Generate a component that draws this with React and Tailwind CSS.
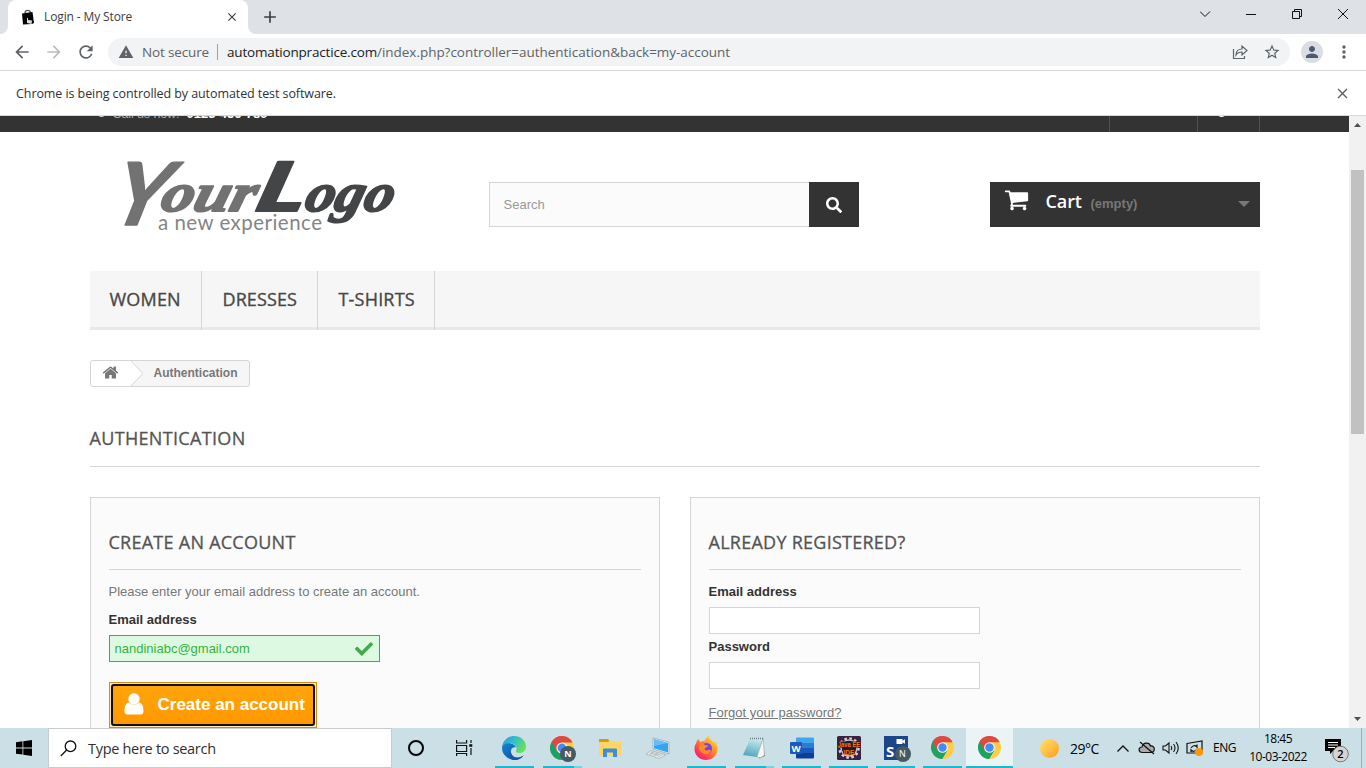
import React from "react";
import {
  MdArrowBack, MdArrowForward, MdRefresh, MdWarning, MdStarBorder, MdPerson, MdMoreVert, MdClose, MdAdd,
} from "react-icons/md";
import { FaSearch, FaCheck } from "react-icons/fa";

function CartIcon() {
  return (
    <svg viewBox="0 0 1792 1792" className="ml-[-1px] mt-[5px] size-[25px]" fill="#fff">
      <path d="M704 1536q0 52-38 90t-90 38-90-38-38-90 38-90 90-38 90 38 38 90zm896 0q0 52-38 90t-90 38-90-38-38-90 38-90 90-38 90 38 38 90zm128-1088v512q0 24-16.5 42.5t-40.5 21.5l-1044 122q13 60 13 70 0 16-24 64h920q26 0 45 19t19 45-19 45-45 19h-1024q-26 0-45-19t-19-45q0-11 8-31.5t16-36 21.500-40 15.500-29.500l-177-823h-204q-26 0-45-19t-19-45 19-45 45-19h256q16 0 28.500 6.500t19.500 15.500 13 24.500 8 26 5.500 29.500 4.500 26h1201q26 0 45 19t19 45z" />
    </svg>
  );
}

function HomeIcon() {
  return (
    <svg viewBox="0 0 1792 1792" className="-mt-px size-[17px]" fill="#777">
      <path d="M1472 992v480q0 26-19 45t-45 19h-384v-384h-256v384h-384q-26 0-45-19t-19-45v-480q0-1 .5-3t.5-3l575-474 575 474q1 2 1 6zm223-69l-62 74q-8 9-21 11h-3q-13 0-21-7l-692-577-692 577q-12 8-24 7-13-2-21-11l-62-74q-8-10-7-23.500t11-21.500l719-599q32-26 76-26t76 26l244 204v-195q0-14 9-23t23-9h192q14 0 23 9t9 23v408l219 182q10 8 11 21.500t-7 23.500z" />
    </svg>
  );
}

function ChromeLogo({ className }) {
  return (
    <svg viewBox="0 0 24 24" className={className}>
      <path d="M12 12 1.6 6A12 12 0 0 1 22.4 6Z" fill="#dd4b3e" />
      <path d="M12 12 1.6 6A12 12 0 0 0 12 24L17.2 15Z" fill="#1da261" />
      <path d="M22.4 6A12 12 0 0 1 12 24L17.2 15 12 6Z" fill="#ffce44" />
      <path d="M1.6 6A12 12 0 0 1 22.4 6.5H12L6.8 15Z" fill="#dd4b3e" />
      <circle cx="12" cy="12" r="5.6" fill="#f4f6f8" />
      <circle cx="12" cy="12" r="4.4" fill="#4a8af4" />
    </svg>
  );
}

function Badge() {
  return (
    <span className="absolute left-[10px] top-[10px] flex size-4 items-center justify-center rounded-full bg-[#455a64] text-[9px] font-bold leading-none text-white">
      N
    </span>
  );
}

function EdgeLogo() {
  return (
    <svg viewBox="0 0 24 24" className="size-6">
      <defs>
        <linearGradient id="edgeTop" x1="0" y1="0" x2="1" y2=".5">
          <stop offset="0" stopColor="#1b9de2" />
          <stop offset=".55" stopColor="#35c1c4" />
          <stop offset="1" stopColor="#66e05c" />
        </linearGradient>
        <linearGradient id="edgeLow" x1="0" y1="0" x2="1" y2="1">
          <stop offset="0" stopColor="#1584d8" />
          <stop offset="1" stopColor="#0c4a94" />
        </linearGradient>
      </defs>
      <path d="M0 11C1 4 6 0 12 0c7 0 12 5 12 10.500 0 4-3 6.500-6.500 6.500-3 0-4-1.200-3.400-2.300C16 11 12.500 7.500 8.500 7.500 4 7.500 1 9 0 11Z" fill="url(#edgeTop)" />
      <path d="M0 12C0 9 4 6.800 8.500 7.500c3 .4 5 2.200 5.600 4-4-1-6 2-5 5.500 1 4 6 6.500 12.500 2.500C18 25 9 25.500 4 20.500 1 18 0 15 0 12Z" fill="url(#edgeLow)" />
      <path d="M9 17c1 5 7 6.500 12.600 2.500C19 23 15 24.500 11 24 7 22 7.500 15 10.500 12.500 9 14 8.700 15.500 9 17Z" fill="#0e5ba8" />
    </svg>
  );
}

function FolderIcon() {
  return (
    <svg viewBox="0 0 22 20" className="h-5 w-[22px]">
      <path d="M0 1h9l1.500 2H22v15H0Z" fill="#ffd566" />
      <path d="M0 1h9l1.500 2L9 4H0Z" fill="#d99a11" />
      <path d="M4 19v-7.500Q4 10.500 5 10.500h12q1 0 1 1V19h-4v-4.500H8V19Z" fill="#3d8fd1" />
    </svg>
  );
}

function LaptopIcon() {
  return (
    <svg viewBox="0 0 24 22" className="h-[22px] w-6">
      <path d="M7 1 23 5v12L7 12Z" fill="#e9eef2" stroke="#8a959c" strokeWidth=".6" />
      <path d="M8 2.300 22 6v9.500L8 11.200Z" fill="#35a4ee" />
      <path d="M8 2.300 22 6 8 9Z" fill="#65bff6" />
      <path d="M5 13.500 20 18l-7 3.500L0 17Z" fill="#e7eaec" stroke="#98a2a8" strokeWidth=".6" />
      <path d="M5 15 16 18.500M3.500 16 14 19.500M8 14.500 4 18M12 16l-4 3" stroke="#8e999f" strokeWidth=".5" />
    </svg>
  );
}

function FirefoxLogo() {
  return (
    <svg viewBox="0 0 24 24" className="size-6">
      <defs>
        <linearGradient id="fox" x1="1" y1="0" x2=".15" y2="1">
          <stop offset="0" stopColor="#fff24a" />
          <stop offset=".4" stopColor="#ff9a27" />
          <stop offset=".75" stopColor="#ff4052" />
          <stop offset="1" stopColor="#e31587" />
        </linearGradient>
      </defs>
      <path d="M4 3 6.500 6C8 5 9.500 5 10.500 5.200 11 3 13 1 15 0c0 3 3 4 4.500 6.500C20.500 7 21 6 21 5c2 3 3 6 2.500 9C23 20 18 24 12 24S.5 19.500.5 13C.5 9 2 8 2.500 6 3 5 4 3 4 3Z" fill="url(#fox)" />
      <circle cx="12.500" cy="12.500" r="5.500" fill="#7542e5" />
      <path d="M5 8c3-1 5 0 6 1l3 .5c0 2-2 2-3 2.500-1 2 1 3 3.500 2 3-1 3 2 0 3.500C10 19.500 6 16 5 12Z" fill="#ff8a25" />
    </svg>
  );
}

function NotepadIcon() {
  return (
    <svg viewBox="0 0 24 24" className="size-6">
      <defs>
        <linearGradient id="pad" x1=".6" y1="0" x2=".3" y2="1">
          <stop offset="0" stopColor="#c9e9ef" />
          <stop offset="1" stopColor="#4ba3bb" />
        </linearGradient>
      </defs>
      <path d="M20 3 23 20l-6 2.500Z" fill="#8b7a63" />
      <path d="M8 3 21 2.500 15 21 1 19Z" fill="url(#pad)" />
      <path d="M21 2.500 15 21l4 .7L22.500 19Z" fill="#f6f8f5" stroke="#8d9998" strokeWidth=".5" />
      <path d="M8 2.500h13" stroke="#667b80" strokeWidth="1.500" strokeDasharray="1 1" />
    </svg>
  );
}

function WordIcon() {
  return (
    <svg viewBox="0 0 24 22" className="h-[22px] w-6">
      <path d="M6 1.500Q6 .5 7 .5h16q1 0 1 1V6H6Z" fill="#41a5ee" />
      <path d="M6 6h18v5H6Z" fill="#2b7cd3" />
      <path d="M6 11h18v5H6Z" fill="#185abd" />
      <path d="M6 16h18v4.500q0 1-1 1H7q-1 0-1-1Z" fill="#103f91" />
      <rect y="5" width="12" height="12" rx="1" fill="#185abd" />
      <text x="6" y="14.500" textAnchor="middle" fontSize="9.500" fontWeight="700" fontFamily="Open Sans, sans-serif" fill="#fff">W</text>
    </svg>
  );
}

function JavaIcon() {
  return (
    <svg viewBox="0 0 24 24" className="size-6">
      <rect width="24" height="24" rx="1.500" fill="#3a2340" />
      <circle cx="12" cy="12" r="9.600" fill="none" stroke="#d8d2da" strokeWidth="2.400" strokeDasharray="2.600 2.430" />
      <circle cx="12" cy="12" r="8" fill="#241a2a" stroke="#c8c0cb" strokeWidth="1.500" />
      <path d="M1 5.500h22v6H1ZM6 11.500h12v6H6Z" fill="#2a1a26" />
      <text x="12" y="10.800" textAnchor="middle" textLength="22.500" lengthAdjust="spacingAndGlyphs" fontSize="7" fontWeight="700" fontFamily="Liberation Sans, sans-serif" fill="#f07818">Java EE</text>
      <text x="12" y="18.800" textAnchor="middle" textLength="11" lengthAdjust="spacingAndGlyphs" fontSize="7" fontWeight="700" fontFamily="Liberation Sans, sans-serif" fill="#f07818">IDE</text>
    </svg>
  );
}

function SIcon() {
  return (
    <span className="relative block size-6 bg-[#1c458c]">
      <svg viewBox="0 0 24 24" className="size-6">
        <path d="M12.500 3h6v1.800L21 3.200v4.600l-2.500-1.600V8h-6Z" fill="#fff" />
        <text x="2" y="21" fontSize="15" fontWeight="700" fontFamily="Open Sans, sans-serif" fill="#fff">S</text>
      </svg>
      <span className="absolute left-[11px] top-[10px] flex size-4 items-center justify-center rounded-full bg-[#455a64] text-[9px] leading-none text-white">N</span>
    </span>
  );
}

function Task({ children, wide, line = true, active, split }) {
  return (
    <div className={`flex h-10 flex-col items-center ${wide ? "w-12" : "w-[47px]"} ${active ? "bg-[#eaf3f6]" : ""}`}>
      <div className="flex h-[38px] items-center justify-center pt-px">{children}</div>
      {line && (
        <div className={`flex h-0.5 bg-[#22b5cb] ${active ? "w-full" : "w-[39px]"}`}>
          {split && <span className="ml-auto h-0.5 w-2 bg-[#7ad2de]" />}
        </div>
      )}
    </div>
  );
}

function BrowserChrome() {
  return (
    <header className="font-['Open_Sans',sans-serif]">
      <div className="flex h-[34px] bg-[#dee1e6]">
        <div className="flex w-2 items-end bg-white"><span className="h-full w-2 rounded-br-lg bg-[#dee1e6]" /></div>
        <div className="flex w-60 items-center rounded-t-lg bg-white pl-3 pr-[9px]">
          <svg viewBox="0 0 16 16" className="mr-[9px] size-4">
            <path d="M5 4C5 .5 10 .5 10.500 4" fill="none" stroke="#555" strokeWidth="1.400" />
            <path d="M2 4.500 12.500 3l1.500 11-2 1-9 .500Z" fill="#000" />
            <path d="M7 14V9h1v2l4 .5-.5 3.500Z" fill="#ddd" />
          </svg>
          <span className="-ml-px flex-1 whitespace-nowrap text-[12px] tracking-[-0.12px] text-[#3c4043]">Login - My Store</span>
          <MdClose className="size-3.5 text-[#3c4043]" />
        </div>
        <div className="flex w-2 bg-white"><span className="h-full w-2 rounded-bl-lg bg-[#dee1e6]" /></div>
        <MdAdd className="ml-1 mt-[7px] size-5 text-[#3c4043]" />
        <svg viewBox="0 0 150 14" className="ml-auto mr-4 mt-[7px] h-3.5 w-[150px]" fill="none" stroke="#111" strokeWidth="1">
          <path d="M0 4.500 5 9.500l5-5" />
          <path d="M46 7.500h10" />
          <path d="M92.500 4.500h7v7h-7ZM94.500 4.500v-2h7v7h-2" />
          <path d="m138 2 10 10M148 2l-10 10" />
        </svg>
      </div>
      <div className="flex h-9 items-center bg-white pl-3">
        <MdArrowBack className="size-5 text-[#5f6368]" />
        <MdArrowForward className="ml-3 size-5 text-[#babcbe]" />
        <MdRefresh className="ml-3 size-5 text-[#5f6368]" />
        <div className="ml-3 flex h-7 w-[1182px] items-center rounded-full bg-[#f1f3f4] pl-2.5 pr-[9px] text-[14px]">
          <MdWarning className="size-4 text-[#5f6368]" />
          <span className="ml-2 w-[75px] whitespace-nowrap text-[13.5px] tracking-[-0.15px] text-[#5f6368]">Not secure</span>
          <span className="h-4 w-px bg-[#9aa0a6]" />
          <span className="ml-[9px] flex-1 whitespace-nowrap text-[13.5px] tracking-[-0.07px] text-[#5f6368]"><span className="tracking-[-0.18px] text-[#202124]">automationpractice.com</span><span className="tracking-[-0.03px]">/index.php?controller=authentication&amp;back=my-account</span></span>
          <svg viewBox="0 0 16 16" className="mr-[15px] size-4" fill="none" stroke="#5f6368" strokeWidth="1.200">
            <path d="M1.500 5v9.500h11V12" />
            <path d="M4 11C4 7 6.500 5 10 5V2l5 4.500-5 4.500V8C7.500 8 5.500 8.500 4 11Z" />
          </svg>
          <MdStarBorder className="size-[18px] text-[#5f6368]" />
        </div>
        <span className="ml-[11px] flex size-[22px] items-center justify-center rounded-full bg-[#dadde2]"><MdPerson className="size-[18px] text-[#4e5a70]" /></span>
        <MdMoreVert className="ml-[11px] size-5 text-[#5f6368]" />
      </div>
      <div className="flex h-[46px] items-center justify-between border-y border-[#d8d8d8] bg-white pl-4 pr-[15px]">
        <span className="pt-0.5 text-[12.5px] tracking-[-0.08px] text-[#303134]">Chrome is being controlled by automated test software.</span>
        <MdClose className="size-[17px] text-[#5f6368]" />
      </div>
    </header>
  );
}

function Logo() {
  return (
    <svg viewBox="0 0 285 84" className="h-[84px] w-[285px] overflow-visible">
      <g fontFamily="Liberation Serif, serif" fontWeight="700" fontStyle="italic" strokeLinejoin="round">
        <g transform="skewX(-15)" fill="#717271" stroke="#717271" strokeWidth="2">
          <text x="14" y="71" fontSize="87" textLength="55" lengthAdjust="spacingAndGlyphs" fontFamily="Lato, sans-serif" strokeWidth="1.500">Y</text>
          <text x="62" y="57" fontSize="54" textLength="94" lengthAdjust="spacingAndGlyphs">our</text>
        </g>
        <g transform="skewX(-15)" fill="#444546" stroke="#444546" strokeWidth="2">
          <text x="156" y="57" fontSize="68" textLength="49" lengthAdjust="spacingAndGlyphs" fontFamily="Lato, sans-serif" fontWeight="900">L</text>
          <text x="206" y="57" fontSize="54" textLength="88" lengthAdjust="spacingAndGlyphs">ogo</text>
        </g>
      </g>
      <text x="46" y="76" fontFamily="Lato, sans-serif" fontSize="20.500" textLength="164" fill="#858585">a new experience</text>
    </svg>
  );
}

function BoxTitle({ children }) {
  return <h2 className="h-[54px] border-b border-[#d6d4d4] font-['Open_Sans',sans-serif] text-[18px] leading-[52px] tracking-[0.26px] text-[#555454] [-webkit-text-stroke:0.3px_#555454]">{children}</h2>;
}

function Page() {
  return (
    <main className="h-[612px] w-[1349px] overflow-hidden bg-white font-['Liberation_Sans',sans-serif] text-[13px] text-[#777]">
      <div className="h-4 overflow-hidden bg-[#333]">
        <div className="mx-auto -mt-3.5 flex h-[30px] w-[1170px] text-[13px] leading-[20px] text-white">
          <span className="ml-[7px] mt-1.5 size-[9px] rounded-full bg-[#ddd]" />
          <span className="ml-[7px] w-[74px] whitespace-nowrap text-[12.5px] leading-6 tracking-[-0.1px] text-[#aaa]">Call us now:</span>
          <b className="leading-6">0123-456-789</b>
          <span className="ml-auto w-[89px] border-x border-[#515151] pl-2.5 font-bold leading-4">Contact us</span>
          <span className="w-[62px] border-r border-[#515151] pl-2 font-bold leading-4">Sign in</span>
        </div>
      </div>
      <div className="mx-auto w-[1170px]">
        <div className="flex h-[139px]">
          <div className="w-[399px] pl-[22px] pt-[22px]"><Logo /></div>
          <div className="mt-[50px] flex h-[45px] w-[370px]">
            <div className="flex flex-1 items-center border border-r-0 border-[#d6d4d4] bg-[#fbfbfb] pl-3.5 text-[#999]">Search</div>
            <button className="flex w-[50px] items-center justify-center bg-[#333] text-white"><FaSearch className="size-4" /></button>
          </div>
          <div className="ml-auto mt-[50px] flex h-[45px] w-[270px] bg-[#333] pl-[15px]">
            <CartIcon />
            <span className="ml-[17px] w-[45px] font-['Open_Sans',sans-serif] text-[18px] font-semibold leading-[38px] tracking-[-0.1px] text-white">Cart</span>
            <span className="font-bold leading-[43px] text-[#777]">(empty)</span>
            <svg viewBox="0 0 12 6" className="ml-auto mr-[10px] mt-[19px] h-1.5 w-3"><path d="M0 0h12L6 6Z" fill="#777" /></svg>
          </div>
        </div>
        <nav className="flex h-[59px] border-b-[3px] border-[#e9e9e9] bg-[#f6f6f6] font-['Open_Sans',sans-serif] text-[18px] leading-[57px] tracking-[0.2px] text-[#484848] [-webkit-text-stroke:0.35px_#484848]">
          <a className="-mb-[3px] w-28 border-r border-[#d6d4d4] pl-5">WOMEN</a>
          <a className="-mb-[3px] w-[116px] border-r border-[#d6d4d4] pl-[21px] tracking-[0.1px]">DRESSES</a>
          <a className="-mb-[3px] w-[117px] border-r border-[#d6d4d4] pl-[21px]">T-SHIRTS</a>
        </nav>
        <div className="mt-[30px] flex h-[27px] w-40 overflow-hidden rounded-[3px] border border-[#d6d4d4] bg-[#f6f6f6] text-[12px] font-bold leading-[25px]">
          <span className="flex w-10 justify-center bg-white pr-px pt-1"><HomeIcon /></span>
          <svg viewBox="0 0 12 25" className="h-[25px] w-3"><path d="M0 0 12 12.500 0 25Z" fill="#fff" /><path d="M0 0 12 12.500 0 25" fill="none" stroke="#d6d4d4" /></svg>
          <span className="ml-[11px]">Authentication</span>
        </div>
        <h1 className="mt-6 h-14 border-b border-[#d6d4d4] font-['Open_Sans',sans-serif] text-[18px] leading-[55px] tracking-[0.33px] text-[#555454] [-webkit-text-stroke:0.3px_#555454]">AUTHENTICATION</h1>
        <div className="mt-[30px] grid grid-cols-2 gap-[30px]">
          <section className="h-[280px] border border-[#d6d4d4] bg-[#fbfbfb] px-[18px] pt-[18px]">
            <BoxTitle>CREATE AN ACCOUNT</BoxTitle>
            <p className="mt-[13px] leading-[18px]">Please enter your email address to create an account.</p>
            <p className="mt-2.5 font-bold leading-[18px] text-[#333]">Email address</p>
            <div className="mt-1.5 flex h-[27px] w-[271px] items-center justify-between border border-[#46a74e] bg-[#ddf9e1] pl-[5px] pr-1.5 text-[#35b33f]">
              nandiniabc@gmail.com<FaCheck className="size-[18px] text-[#46a74e]" />
            </div>
            <div className="mt-5 h-[46px] w-[208px] border border-[#d88912] bg-[#ffe8b8] p-px">
              <button className="flex h-[42px] w-full items-center rounded-[3px] border-2 border-[#101010] bg-linear-to-b from-[#ffa50c] to-[#ff9800] pl-[11px] text-[17px] font-bold text-white">
                <svg viewBox="0 0 20 22" className="-mt-0.5 h-[22px] w-5" fill="#fff"><circle cx="10" cy="6" r="5.700" /><path d="M5 9.500C1.500 10 .5 14 .5 18q0 3.500 3 3.500h13q3 0 3-3.500c0-4-1-8-4.500-8.500-3 3-7 3-10 0Z" /></svg>
                <span className="ml-[14px] whitespace-nowrap">Create an account</span>
              </button>
            </div>
          </section>
          <section className="h-[280px] border border-[#d6d4d4] bg-[#fbfbfb] px-[18px] pt-[18px]">
            <BoxTitle>ALREADY REGISTERED?</BoxTitle>
            <p className="mt-[13px] font-bold leading-[18px] text-[#333]">Email address</p>
            <div className="mt-1.5 h-[27px] w-[271px] border border-[#d6d4d4] bg-white" />
            <p className="mt-1 font-bold leading-[18px] text-[#333]">Password</p>
            <div className="mt-[6px] h-[27px] w-[271px] border border-[#d6d4d4] bg-white" />
            <p className="mt-[15px] leading-[18px] underline">Forgot your password?</p>
          </section>
        </div>
      </div>
    </main>
  );
}

function Taskbar() {
  return (
    <footer className="flex h-10 bg-[#cbe0e6] font-['Open_Sans',sans-serif] text-black">
      <div className="flex w-12 items-center justify-center">
        <svg viewBox="0 0 16 16" className="size-4"><path d="M0 2.200 6.500 1.300v6.200H0ZM7.300 1.200 16 0v7.500H7.300ZM0 8.400h6.500v6.200L0 13.700ZM7.300 8.400H16V16l-8.700-1.200Z" /></svg>
      </div>
      <div className="flex w-[344px] items-center border border-[#c6cccf] bg-white pl-[11px]">
        <svg viewBox="0 0 17 17" className="size-[17px]" fill="none" stroke="#111" strokeWidth="1.300"><circle cx="10.500" cy="6.300" r="5.300" /><path d="M6.600 10 .8 16" /></svg>
        <span className="ml-[11px] pt-0.5 text-[14.5px] tracking-[-0.3px] text-[#303030]">Type here to search</span>
      </div>
      <div className="flex w-12 items-center justify-center"><span className="size-4 rounded-full border-[2.5px] border-black" /></div>
      <div className="flex w-[50px] items-center justify-center pr-px">
        <svg viewBox="0 0 17 16" className="h-4 w-[17px]" fill="none" stroke="#111" strokeWidth="1.200"><path d="M.6 0v3h10V0M.6 5.500h10v6H.6ZM.6 16v-2.500h10V16M15 0v3M15 8v7" /><path d="M13.300 4.200h3v2.600h-3Z" fill="#111" stroke="none" /></svg>
      </div>
      <Task wide><EdgeLogo /></Task>
      <Task wide split><span className="relative"><ChromeLogo className="size-6" /><Badge /></span></Task>
      <Task wide line={false}><FolderIcon /></Task>
      <Task wide line={false}><LaptopIcon /></Task>
      <Task wide><FirefoxLogo /></Task>
      <Task wide split><NotepadIcon /></Task>
      <Task><WordIcon /></Task>
      <Task><JavaIcon /></Task>
      <Task><SIcon /></Task>
      <Task><ChromeLogo className="size-[23px]" /></Task>
      <Task active><ChromeLogo className="size-[23px]" /></Task>
      <div className="flex flex-1 items-center pl-[27px]">
        <span className="size-[19px] rounded-full bg-linear-to-br from-[#ffe36a] to-[#ff9d0a]" />
        <span className="ml-[11px] w-[47px] text-[14px] tracking-[-0.5px]">29°C</span>
        <svg viewBox="0 0 12 7" className="h-[7px] w-3" fill="none" stroke="#111" strokeWidth="1.300"><path d="m.5 6.500 5.500-5.500 5.500 5.500" /></svg>
        <svg viewBox="0 0 18 14" className="ml-[9px] h-3.5 w-[18px]" fill="none" stroke="#111" strokeWidth="1.200"><path d="M4.500 11.500C0 11.500 0 6 4 6 5 1 11.500 1 12.500 5c5-.5 5 6.500.5 6.500Z" fill="#aaa" /><path d="m2 1 14 12" /></svg>
        <svg viewBox="0 0 18 14" className="ml-1.5 h-3.5 w-[18px]" fill="none" stroke="#111" strokeWidth="1.100"><path d="M1 5h2.500L7 2v10L3.500 9H1ZM9 5q1.500 2 0 4M11.500 3q3 4 0 8M14 1q4.500 6 0 12" /></svg>
        <svg viewBox="0 0 17 17" className="ml-1.5 size-[17px]" fill="none" stroke="#111" strokeWidth="1.200"><path d="M1 3.500 16 1v12H1ZM5 8q3-4 6-1V4.500M11 9q-3 4-6 1V12" /><circle cx="13" cy="12" r="4" fill="#ff9800" stroke="none" /></svg>
        <span className="ml-[10px] w-[34px] text-[12px] tracking-[-0.5px]">ENG</span>
        <div className="w-[62px] whitespace-nowrap text-center text-[12px] leading-[18px] tracking-[-0.5px]"><div>18:45</div><div>10-03-2022</div></div>
        <svg viewBox="0 0 25 25" className="ml-[16px] mt-1 size-[25px]">
          <path d="M0 1h16v12H8l-3 3v-3H0Z" /><path d="M3 4.500h10M3 7h10M3 9.500h7" stroke="#fff" strokeWidth="1" />
          <circle cx="15.500" cy="16" r="7.800" fill="#d4d4d4" stroke="#777" /><text x="15.500" y="20" textAnchor="middle" fontSize="11" fontWeight="600" fontFamily="Open Sans, sans-serif">2</text>
        </svg>
      </div>
      <span className="mr-1 w-px bg-[#9eafb5]" />
    </footer>
  );
}

export default function App() {
  return (
    <div className="h-[768px] w-[1366px] overflow-hidden bg-white">
      <BrowserChrome />
      <div className="flex h-[612px]">
        <Page />
        <div className="flex w-[17px] flex-col items-center bg-[#f1f1f1]">
          <svg viewBox="0 0 7 4" className="mt-[7px] h-1 w-[7px]"><path d="M0 4 3.500 0 7 4Z" fill="#505050" /></svg>
          <span className="mt-[43px] h-[264px] w-[13px] bg-[#c1c1c1]" />
          <svg viewBox="0 0 7 4" className="mb-[7px] mt-auto h-1 w-[7px]"><path d="M0 0h7L3.500 4Z" fill="#505050" /></svg>
        </div>
      </div>
      <Taskbar />
    </div>
  );
}
